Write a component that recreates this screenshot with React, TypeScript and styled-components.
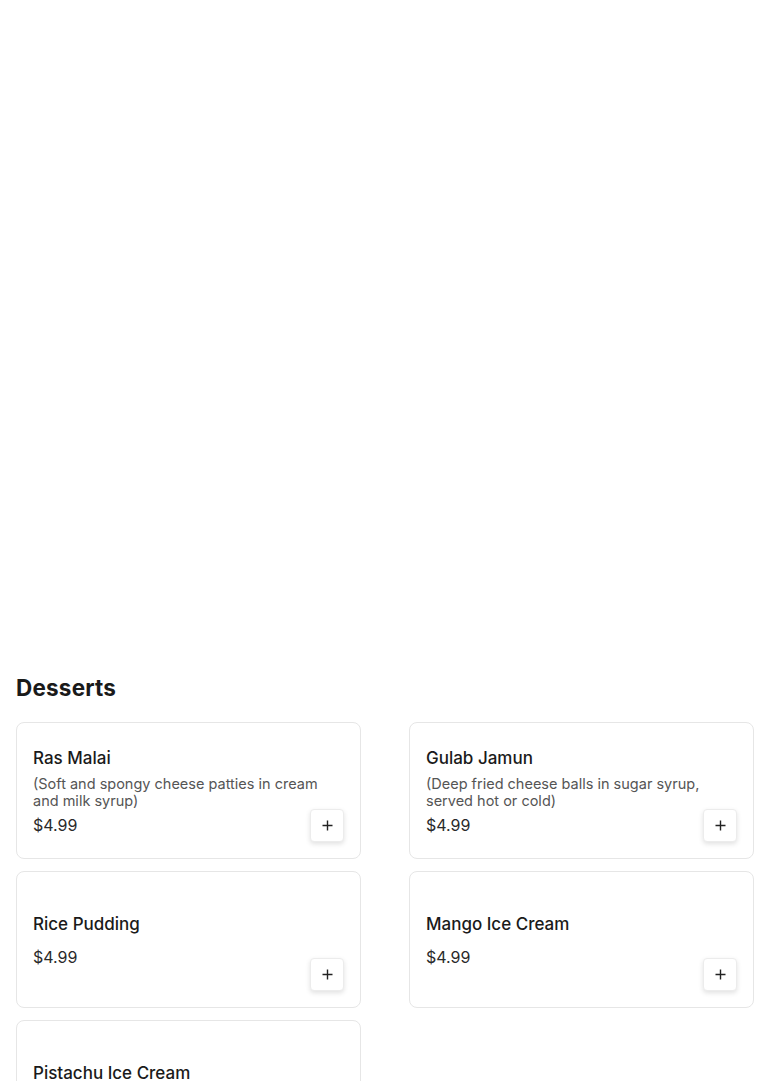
import React from "react";
import styled, { createGlobalStyle } from "styled-components";

const GlobalStyle = createGlobalStyle`
  html, body { margin: 0; padding: 0; background: #ffffff; }
  body { font-family: Inter, "Open Sans", Arial, sans-serif; color: #1a1a1a; }
  * { box-sizing: border-box; }
`;

const Page = styled.div`
  width: 100%;
`;

const Hero = styled.div`
  height: 660px;
  background: #ffffff;
`;

const Section = styled.section`
  padding: 0 16px 24px;
`;

const Heading = styled.h2`
  margin: 13px 0 19px;
  font-size: 22.5px;
  line-height: 30px;
  font-weight: 700;
  color: #1a1a1a;
  letter-spacing: 0.2px;
`;

const Grid = styled.div`
  display: grid;
  grid-template-columns: 1fr 1fr;
  column-gap: 48px;
  row-gap: 12px;
`;

const Card = styled.div`
  display: grid;
  grid-template-columns: 1fr;
  grid-template-rows: 1fr;
  min-height: 137px;
  padding: 16px;
  border: 1px solid #e6e6e6;
  border-radius: 8px;
  background: #ffffff;

  & > * {
    grid-area: 1 / 1;
  }
`;

const Info = styled.div`
  display: flex;
  flex-direction: column;
  align-self: center;
  min-width: 0;
`;

const Title = styled.div`
  font-size: 17px;
  line-height: 22px;
  font-weight: 500;
  color: #1a1a1a;
`;

const Desc = styled.div`
  margin: 6px 0;
  font-size: 14.5px;
  line-height: 17px;
  color: #555555;
`;

const Price = styled.div`
  font-size: 16px;
  line-height: 20px;
  color: #2a2a2a;
`;

const AddButton = styled.button`
  justify-self: end;
  align-self: end;
  width: 34px;
  height: 33px;
  display: flex;
  align-items: center;
  justify-content: center;
  padding: 0;
  border: 1px solid #ececec;
  border-radius: 4px;
  background: #ffffff;
  box-shadow: 0 2px 5px rgba(0, 0, 0, 0.12);
  cursor: pointer;
`;

const PlusIcon = () => (
  <svg width="11" height="11" viewBox="0 0 11 11" fill="none">
    <path d="M5.5 0.5v10M0.5 5.5h10" stroke="#222" strokeWidth="1.4" />
  </svg>
);

const items = [
  { name: "Ras Malai", desc: "(Soft and spongy cheese patties in cream and milk syrup)", price: "$4.99" },
  { name: "Gulab Jamun", desc: "(Deep fried cheese balls in sugar syrup, served hot or cold)", price: "$4.99" },
  { name: "Rice Pudding", desc: "", price: "$4.99" },
  { name: "Mango Ice Cream", desc: "", price: "$4.99" },
  { name: "Pistachu Ice Cream", desc: "", price: "$4.99" },
];

export default function App() {
  return (
    <Page>
      <GlobalStyle />
      <Hero />
      <Section>
        <Heading>Desserts</Heading>
        <Grid>
          {items.map((it) => (
            <Card key={it.name}>
              <Info>
                <Title>{it.name}</Title>
                <Desc>{it.desc}</Desc>
                <Price>{it.price}</Price>
              </Info>
              <AddButton aria-label={`Add ${it.name}`}>
                <PlusIcon />
              </AddButton>
            </Card>
          ))}
        </Grid>
      </Section>
    </Page>
  );
}
